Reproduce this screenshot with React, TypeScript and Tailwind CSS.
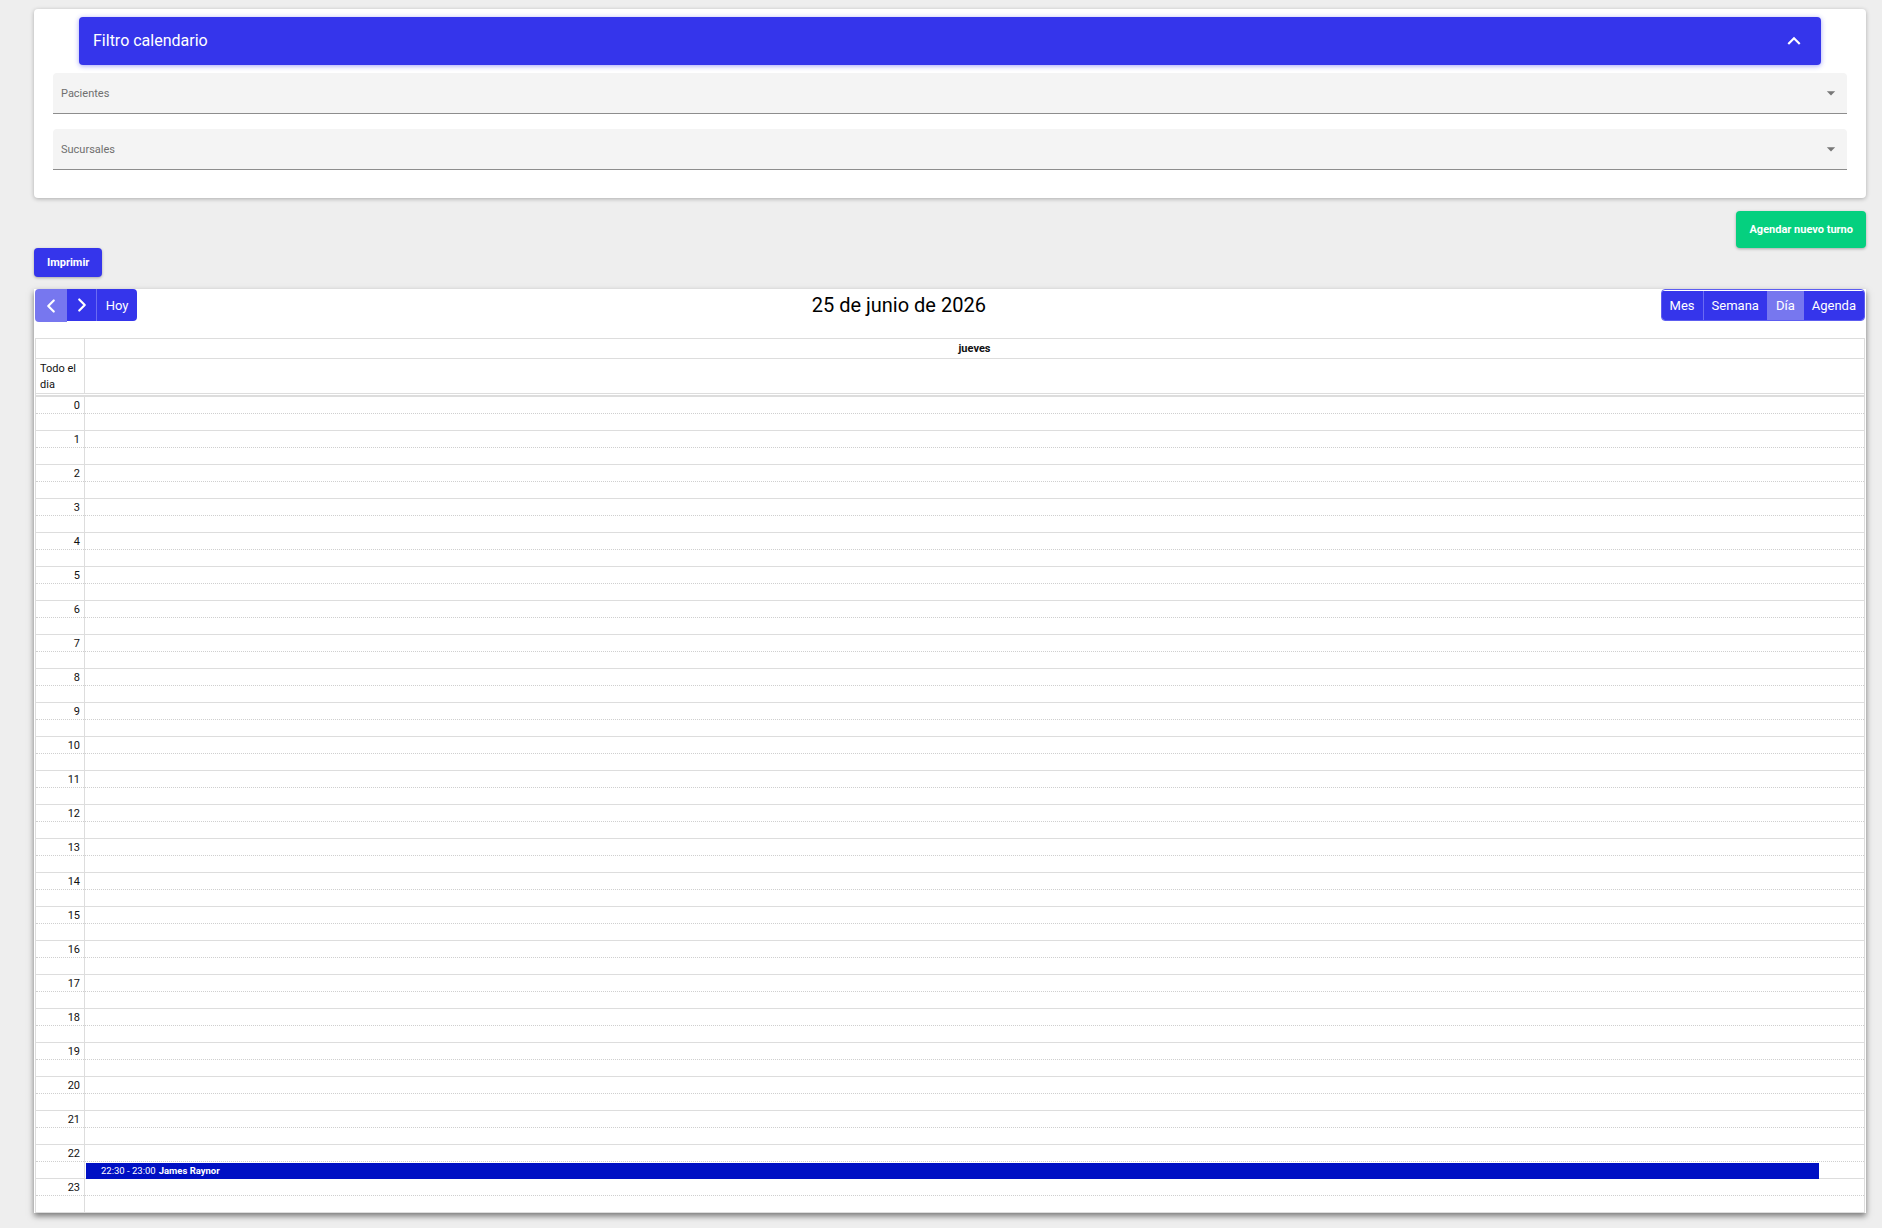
import React from "react";

const HOURS = Array.from({ length: 24 }, (_, i) => i);

function ExpandLess() {
  return (
    <svg width="26" height="26" viewBox="0 0 24 24" fill="#ffffff">
      <path d="M12 8l-6 6 1.41 1.41L12 10.83l4.59 4.58L18 14z" />
    </svg>
  );
}

function ArrowDropDown() {
  return (
    <svg width="20" height="20" viewBox="0 0 24 24" fill="#777777">
      <path d="M7 10l5 5 5-5z" />
    </svg>
  );
}

function ChevronLeft() {
  return (
    <svg width="22" height="22" viewBox="0 0 24 24" fill="none" stroke="#ffffff" strokeWidth="2.4" strokeLinecap="round" strokeLinejoin="round">
      <path d="m15 18-6-6 6-6" />
    </svg>
  );
}

function ChevronRight() {
  return (
    <svg width="22" height="22" viewBox="0 0 24 24" fill="none" stroke="#ffffff" strokeWidth="2.4" strokeLinecap="round" strokeLinejoin="round">
      <path d="m9 18 6-6-6-6" />
    </svg>
  );
}

function SelectField({ label }: { label: string }) {
  return (
    <div className="flex h-[41px] items-center justify-between rounded-t-[4px] border-b border-[#8d8d8d] bg-[#f4f4f4] pl-[8px] pr-[6px]">
      <span className="pt-[3px] text-[11px] text-[#6f6f6f]">{label}</span>
      <ArrowDropDown />
    </div>
  );
}

function SlotRows({ showLabels }: { showLabels: boolean }) {
  return (
    <>
      {HOURS.map((h) => (
        <div key={h} className="flex flex-col">
          <div className="h-[17px] border-b border-dotted border-[#cfcfcf] pr-[4px] text-right text-[11px] leading-[17px] text-[#111]">
            {showLabels ? h : null}
          </div>
          <div className="h-[17px] border-b border-[#dddddd]" />
        </div>
      ))}
    </>
  );
}

export default function App() {
  return (
    <div
      className="min-h-screen bg-[#eeeeee] pb-[14px] pl-[34px] pr-[16px] pt-[9px]"
      style={{ fontFamily: "Roboto, 'Liberation Sans', sans-serif" }}
    >
      {/* Filter panel */}
      <div className="rounded-[4px] bg-white px-[19px] pb-[28px] pt-[8px] shadow-[0_1px_4px_rgba(0,0,0,0.28)]">
        <div className="mx-[26px] flex h-[48px] items-center justify-between rounded-[4px] bg-[#3535eb] pl-[14px] pr-[14px] shadow-[0_1px_5px_rgba(53,53,235,0.45)]">
          <span className="text-[16px] text-white">Filtro calendario</span>
          <ExpandLess />
        </div>
        <div className="mt-[8px]">
          <SelectField label="Pacientes" />
        </div>
        <div className="mt-[15px]">
          <SelectField label="Sucursales" />
        </div>
      </div>

      {/* Actions */}
      <div className="mt-[13px] flex justify-end">
        <button className="h-[37px] rounded-[4px] bg-[#05d07f] px-[13px] pt-[1px] text-[11px] font-bold text-white shadow-[0_1px_3px_rgba(0,0,0,0.3)]">
          Agendar nuevo turno
        </button>
      </div>
      <div className="flex">
        <button className="h-[29px] rounded-[4px] bg-[#3535eb] px-[13px] pt-[1px] text-[11px] font-bold text-white shadow-[0_1px_3px_rgba(0,0,0,0.3)]">
          Imprimir
        </button>
      </div>

      {/* Calendar */}
      <div className="mt-[12px] bg-white px-[1px] shadow-[0_3px_6px_rgba(0,0,0,0.5)]">
        <div className="mb-[17px] flex h-[32px] items-center">
          <div className="flex h-[32px]">
            <button className="flex h-[33px] w-[32px] items-center justify-center rounded-l-[4px] bg-[#7777ef]">
              <ChevronLeft />
            </button>
            <button className="flex h-[32px] w-[30px] items-center justify-center border-r border-[#6b6bf2] bg-[#3535eb]">
              <ChevronRight />
            </button>
            <button className="h-[32px] w-[40px] rounded-r-[4px] bg-[#3535eb] pt-[1px] text-[13px] text-white">
              Hoy
            </button>
          </div>
          <div className="flex-1 text-center text-[20px] text-black">25 de junio de 2026</div>
          <div className="flex h-[32px] overflow-hidden rounded-[4px] border border-[#5d5df0] pt-[1px]">
            <button className="border-r border-[#6b6bf2] bg-[#3535eb] px-[8px] text-[13px] text-white">Mes</button>
            <button className="bg-[#3535eb] px-[8px] text-[13px] text-white">Semana</button>
            <button className="bg-[#7777ef] px-[9px] text-[13px] text-white">Día</button>
            <button className="bg-[#3535eb] px-[8px] text-[13px] text-white">Agenda</button>
          </div>
        </div>

        <div className="border-x border-t border-[#dddddd]">
          {/* Day header */}
          <div className="flex border-b border-[#dddddd]">
            <div className="w-[49px] shrink-0 border-r border-[#dddddd]" />
            <div className="h-[19px] flex-1 text-center text-[11px] font-bold leading-[19px] text-[#111]">jueves</div>
          </div>
          {/* All-day row */}
          <div className="flex border-b border-[#dddddd]">
            <div className="h-[34px] w-[49px] shrink-0 border-r border-[#dddddd] px-[4px] pt-[2px] text-[11px] leading-[16px] text-[#111]">
              Todo el dia
            </div>
            <div className="flex-1" />
          </div>
          {/* Time grid */}
          <div className="mt-[1px] flex border-t-2 border-[#dddddd]">
            <div className="w-[49px] shrink-0 border-r border-[#dddddd]">
              <SlotRows showLabels />
            </div>
            <div className="relative flex-1">
              <SlotRows showLabels={false} />
              <div className="absolute left-[1px] right-[45px] top-[766px] flex h-[16px] items-center bg-[#0010c4] pl-[15px] pt-[1px] text-[9.5px] text-white">
                <span>22:30 - 23:00</span>
                <span className="ml-[3px] font-bold">James Raynor</span>
              </div>
            </div>
          </div>
        </div>
      </div>
    </div>
  );
}
